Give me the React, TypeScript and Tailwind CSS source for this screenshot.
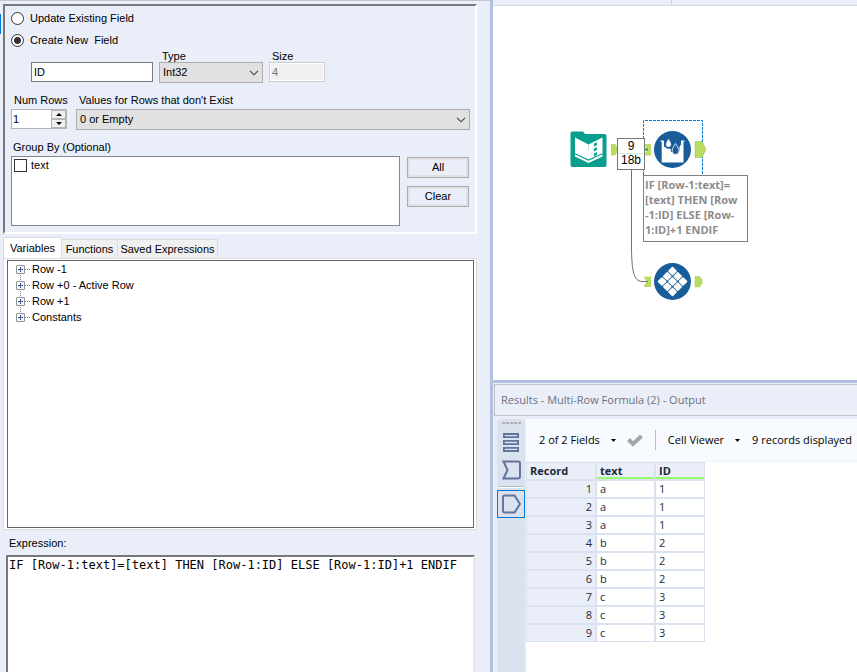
import { useState } from "react";

const rows: [number, string, number][] = [
  [1, "a", 1],
  [2, "a", 1],
  [3, "a", 1],
  [4, "b", 2],
  [5, "b", 2],
  [6, "b", 2],
  [7, "c", 3],
  [8, "c", 3],
  [9, "c", 3],
];

const treeItems = ["Row -1", "Row +0 - Active Row", "Row +1", "Constants"];

function Chevron() {
  return (
    <svg className="pointer-events-none absolute top-2 right-1 h-[6px] w-[10px]" viewBox="0 0 10 6" fill="none" stroke="#444" strokeWidth="1.1">
      <path d="M1 0.8 5 4.8 9 0.8" />
    </svg>
  );
}

function Radio({ id, label, checked, onChange }: { id: string; label: string; checked: boolean; onChange: () => void }) {
  return (
    <div className="flex h-[22px] items-center gap-[6px]">
      <input
        type="radio"
        id={id}
        name="mode"
        checked={checked}
        onChange={onChange}
        className="size-[13px] appearance-none rounded-full border border-[#333] bg-white checked:bg-[radial-gradient(circle,#333_0_3px,#fff_4px)]"
      />
      <label htmlFor={id} className="whitespace-pre">{label}</label>
    </div>
  );
}

function FieldSettings() {
  const [mode, setMode] = useState("create");
  const [count, setCount] = useState(1);
  const [grouped, setGrouped] = useState(false);
  const button = "h-[21px] w-full border border-[#adadad] shadow-[inset_0_0_0_2px_#e1e1e1]";
  return (
    <section className="mr-[13px] ml-[3px] h-[230px] border-2 border-t-[#77777c] border-r-white border-b-white border-l-[#77777c] pt-px pr-[5px] pl-[6px]">
      <Radio id="update" label="Update Existing Field" checked={mode === "update"} onChange={() => setMode("update")} />
      <Radio id="create" label="Create New  Field" checked={mode === "create"} onChange={() => setMode("create")} />
      <div className="flex items-end gap-[6px] pl-5">
        <input aria-label="Field name" defaultValue="ID" className="mb-px h-5 w-[122px] border border-[#7a7a7a] bg-white px-[2px]" />
        <div className="w-[104px]">
          <label htmlFor="type" className="block pl-[3px] leading-[11px]">Type</label>
          <div className="relative">
            <select id="type" className="block h-[21px] w-full appearance-none border border-[#adadad] bg-[#e1e1e1] px-[3px]">
              <option>Int32</option>
            </select>
            <Chevron />
          </div>
        </div>
        <div className="w-14 self-start">
          <label htmlFor="size" className="block pl-[3px] leading-[11px]">Size</label>
          <input id="size" disabled defaultValue="4" className="block h-5 w-full border border-[#ccc] bg-[#f0f0f0] px-[2px] text-[#777] shadow-[inset_0_0_0_1px_#fff]" />
        </div>
      </div>
      <div className="mt-[9px] flex gap-[9px]">
        <div className="w-14 shrink-0">
          <label htmlFor="numrows" className="block pb-px pl-[3px] leading-4 whitespace-nowrap">Num Rows</label>
          <div className="flex h-5 border border-[#b4b4b4] bg-white">
            <input
              id="numrows"
              type="number"
              value={count}
              onChange={(e) => setCount(Number(e.target.value))}
              className="w-0 min-w-0 flex-1 px-px [appearance:textfield] [&::-webkit-inner-spin-button]:appearance-none"
            />
            <div className="flex w-[15px] flex-col">
              <button type="button" aria-label="Increase" onClick={() => setCount(count + 1)} className="grid flex-1 place-items-center border border-[#b4b4b4] bg-[#f0f0f0]">
                <svg className="h-[3px] w-[6px]" viewBox="0 0 6 3"><path d="M0 3 3 0 6 3Z" /></svg>
              </button>
              <button type="button" aria-label="Decrease" onClick={() => setCount(count - 1)} className="grid flex-1 place-items-center border border-[#b4b4b4] bg-[#f0f0f0]">
                <svg className="h-[3px] w-[6px]" viewBox="0 0 6 3"><path d="M0 0 3 3 6 0Z" /></svg>
              </button>
            </div>
          </div>
        </div>
        <div className="flex-1">
          <label htmlFor="missing" className="block pb-px pl-[3px] leading-4">Values for Rows that don't Exist</label>
          <div className="relative">
            <select id="missing" className="block h-[21px] w-full appearance-none border border-[#adadad] bg-[#e1e1e1] px-[3px]">
              <option>0 or Empty</option>
            </select>
            <Chevron />
          </div>
        </div>
      </div>
      <div id="groupby" className="mt-2 pl-[2px] leading-[18px]">Group By (Optional)</div>
      <div className="flex gap-[7px] pr-px">
        <div role="group" aria-labelledby="groupby" className="h-[70px] flex-1 border border-[#828790] bg-white p-[2px]">
          <div className="flex items-start gap-1">
            <input id="text" type="checkbox" checked={grouped} onChange={() => setGrouped(!grouped)} className="size-[13px] appearance-none border border-[#333] bg-white checked:bg-[#333]" />
            <label htmlFor="text" className="leading-3">text</label>
          </div>
        </div>
        <div className="flex w-[62px] flex-col gap-2 pt-px">
          <button type="button" className={button}>All</button>
          <button type="button" className={button}>Clear</button>
        </div>
      </div>
    </section>
  );
}

function VariablesTabs() {
  return (
    <section className="mt-[3px] mr-[13px] ml-[3px]">
      <div role="tablist" className="flex items-end">
        <button role="tab" aria-selected="true" type="button" className="h-[21px] w-[59px] border border-b-0 border-[#dcdcdc] bg-white">Variables</button>
        <button role="tab" aria-selected="false" type="button" className="h-[19px] w-14 border-t border-r border-[#dcdcdc] bg-[#f0f0f0]">Functions</button>
        <button role="tab" aria-selected="false" type="button" className="h-[19px] w-[100px] border-t border-r border-[#dcdcdc] bg-[#f0f0f0]">Saved Expressions</button>
      </div>
      <div className="h-[272px] border border-[#dcdcdc] bg-white py-px pr-[2px] pl-[3px]">
        <ul className="h-full border border-[#646464] bg-white pl-2">
          {treeItems.map((item, i) => (
            <li key={item} className="flex h-4 items-center gap-px">
              <svg className="h-4 w-[15px] shrink-0" viewBox="0 0 15 16" fill="none">
                <path d={i === 0 ? "M4.5 12V16" : i === 3 ? "M4.5 0V4" : "M4.5 0V16"} stroke="#888" strokeDasharray="1 1" />
                <path d="M9 8.5H14" stroke="#888" strokeDasharray="1 1" />
                <rect x="0.5" y="4.5" width="8" height="8" rx="0.5" fill="#f7f7f7" stroke="#919191" />
                <path d="M2 8.5H7M4.5 6V11" stroke="#34559e" />
              </svg>
              <span>{item}</span>
            </li>
          ))}
        </ul>
      </div>
    </section>
  );
}

function Canvas() {
  return (
    <div className="relative h-[374px] overflow-hidden bg-white">
      <svg className="absolute top-0 left-0 h-[320px] w-[260px]" viewBox="493 6 260 320" fill="none">
        <path d="M643.5 175V120.500H702.500V175" stroke="#0078d7" strokeDasharray="3 1" />
        <path d="M631.500 169V245C631.500 272 634 281 642 281.500H648" stroke="#707070" />
        <path d="M570.500 133.500Q570.500 131.500 572.500 131.500H583L585 134H604.500Q606.500 134 606.500 136V165Q606.500 167 604.500 167H572.500Q570.500 167 570.500 165Z" fill="#0a9e8e" />
        <path d="M575 137.500 588.500 144.500 602.500 137.500V156.500L588.500 163 575 156.500Z" fill="#fff" />
        <path d="M588.500 144.500V150" stroke="#0a9e8e" strokeWidth="0.300" />
        <path d="M575 153.800 588.500 160 602.500 153.800" stroke="#0a9e8e" strokeWidth="1.200" />
        <path d="M593.900 143.800 596.900 142.200V145.200L593.900 146.600ZM593.900 148.700 596.900 147.100V150.100L593.900 151.500ZM593.900 153.600 596.900 152V155L593.900 156.400Z" fill="#0a9e8e" />
        <g fill="#b9dc62">
          <path d="M611 144H615Q618 147 618 149.500T615 155.500H611Z" />
          <path d="M644 144H651V155.500H644L647 149.500Z" />
          <path d="M695 141.500H702L706 149.500 702 157.500H695Z" stroke="#97bb43" strokeWidth="0.500" />
          <path d="M643.500 276.500H651V287H643.500L646.500 281.500Z" />
          <path d="M695 276.500H699.500L702 279.500V283.500L699.500 287H695Z" stroke="#a6ca50" strokeWidth="0.500" />
        </g>
        <path d="M643 281.500H648" stroke="#707070" />
        <path d="M645 149.500H648" stroke="#2f9a52" strokeWidth="2" />
        <circle cx="672.500" cy="149.500" r="18.500" fill="#175d99" />
        <path d="M660.500 140.500H664V150.500L668 149.500 672 152.500H678.500L681 150V140.500H684.500V141.500L683.500 142V162.500H661.700V142L660.500 141.500Z" fill="#fff" />
        <path d="M664 146.500 667 148.500 671 149 670 153H664ZM681 144.500 679.500 147V153H681Z" fill="#fff" />
        <path d="M668.500 138.500Q671.500 142.500 671.300 144.500A2.800 2.800 0 0 1 665.700 144.500Q665.500 142.500 668.500 138.500Z" fill="#fff" stroke="#175d99" strokeWidth="0.600" />
        <path d="M675.500 143.500Q679.300 149 679 151A3.500 3.500 0 0 1 672 151Q671.800 149 675.500 143.500Z" fill="#175d99" stroke="#fff" strokeWidth="0.800" />
        <circle cx="672.500" cy="281.500" r="18.500" fill="#175d99" />
        <g transform="rotate(45 672.500 281.500)" fill="#fff">
          {[0, 1, 2].flatMap((r) =>
            [0, 1, 2].map((c) => <rect key={`${r}${c}`} x={661.8 + c * 7.4} y={270.8 + r * 7.4} width="6.600" height="6.600" rx="0.900" />),
          )}
        </g>
      </svg>
      <div className="absolute top-[132px] left-[124px] h-8 w-7 border border-[#777] bg-white pt-px text-center text-[12px] leading-[13px]">
        <div className="border-b border-[#cdeedd]">9</div>
        <div className="leading-3">18b</div>
      </div>
      <div className="absolute top-[169px] left-[150px] h-[67px] w-[105px] border border-[#808080] bg-white pt-px pl-px font-['Open_Sans','Noto_Sans',sans-serif] text-[11px] leading-[15px] font-bold whitespace-nowrap text-[#8c8c8c]">
        IF [Row-1:text]=
        <br />
        [text] THEN [Row
        <br />
        -1:ID] ELSE [Row-
        <br />
        1:ID]+1 ENDIF
      </div>
    </div>
  );
}

function Caret() {
  return <svg className="h-[3px] w-[5px]" viewBox="0 0 5 3"><path d="M0 0H5L2.500 3Z" /></svg>;
}

function Results() {
  const cell = "h-[18px] border border-[#dbe2ef] p-0";
  return (
    <section className="flex min-h-0 flex-1 flex-col border-t-[3px] border-[#b1c0e0] pl-px font-['Open_Sans','Noto_Sans',sans-serif]">
      <h2 className="mt-px flex h-8 shrink-0 items-center border border-r-0 border-[#c3c3c6] pl-[6px] whitespace-nowrap text-[#6f7078]">Results - Multi-Row Formula (2) - Output</h2>
      <div className="flex min-h-0 flex-1 pt-[3px] pl-[3px]">
        <div className="flex w-7 shrink-0 flex-col items-center rounded-t bg-[#dbe2ef]">
          <svg className="mt-[3px] h-[2px] w-[19px]" viewBox="0 0 19 2" fill="none">
            <path d="M0 1H19" stroke="#b0b0b4" strokeWidth="2" strokeDasharray="3 1" />
          </svg>
          <button type="button" aria-label="Data" className="mt-[9px]">
            <svg className="block h-[19px] w-4" viewBox="0 0 16 19" fill="none" stroke="#62739c" strokeWidth="1.800">
              <path d="M0.900 1H15.100V4.200H0.900ZM0.900 7.900H15.100V11.100H0.900ZM0.900 14.800H15.100V18H0.900Z" />
            </svg>
          </button>
          <button type="button" aria-label="Input anchor" className="mt-2">
            <svg className="block h-5 w-[19px]" viewBox="0 0 19 20" fill="none" stroke="#62739c" strokeWidth="2">
              <path d="M1.500 1.500H16Q18 1.500 18 3.500V16.500Q18 18.500 16 18.500H1.500L5.500 10Z" />
            </svg>
          </button>
          <div className="mt-[6px] h-[2px] w-6 border-t border-b border-t-[#b8b8bb] border-b-white" />
          <button type="button" aria-label="Output anchor" className="mt-[2px] grid size-7 shrink-0 place-items-center border border-[#0078d7]">
            <svg className="h-5 w-[19px]" viewBox="0 0 19 20" fill="none" stroke="#62739c" strokeWidth="2">
              <path d="M3 1.500H12.500L18 10 12.500 18.500H3Q1 18.500 1 16.500V3.500Q1 1.500 3 1.500Z" />
            </svg>
          </button>
        </div>
        <div className="ml-px min-w-0 flex-1 overflow-hidden bg-white">
          <div className="flex h-[43px] items-center rounded-tl border-b border-[#f0f2f5] bg-[#f7fbff] pl-[13px] whitespace-nowrap">
            <button type="button" className="flex items-center gap-[11px]">2 of 2 Fields <Caret /></button>
            <svg className="mr-3 ml-[11px] h-[13px] w-4" viewBox="0 0 16 13" fill="none" stroke="#a5a5a5" strokeWidth="4">
              <path d="M1.500 5.500 6 10 14.500 2" />
            </svg>
            <div className="mr-3 h-5 w-px bg-[#bdbdbd]" />
            <button type="button" className="flex items-center gap-[11px]">Cell Viewer <Caret /></button>
            <span className="ml-3">9 records displayed</span>
          </div>
          <table className="border-separate border-spacing-0 text-[#1f2937]">
            <thead>
              <tr className="bg-[#e9eef9] text-left leading-[14px]">
                <th className={`${cell} w-[70px] pl-[3px]`}>Record</th>
                <th className={`${cell} w-[59px] pl-[3px] shadow-[inset_0_-2px_0_#98fb70]`}>text</th>
                <th className={`${cell} w-[50px] pl-[3px] shadow-[inset_0_-2px_0_#98fb70]`}>ID</th>
              </tr>
            </thead>
            <tbody className="leading-4">
              {rows.map(([n, text, id]) => (
                <tr key={n}>
                  <td className={`${cell} bg-[#e9eef9] pr-[3px] text-right`}>{n}</td>
                  <td className={`${cell} pl-[3px]`}>{text}</td>
                  <td className={`${cell} pl-[3px]`}>{id}</td>
                </tr>
              ))}
            </tbody>
          </table>
        </div>
      </div>
    </section>
  );
}

export default function App() {
  return (
    <main className="grid h-screen grid-cols-[minmax(0,490fr)_minmax(0,367fr)] overflow-hidden bg-[#e9eef9] font-['Liberation_Sans',Arial,sans-serif] text-[11px] text-black">
      <div className="flex min-h-0 flex-col border-t border-[#c6c6c8]">
        <div className="relative pt-[3px]">
          <div className="absolute top-[13px] left-0 h-5 w-px bg-[#0078d7]" />
          <FieldSettings />
        </div>
        <VariablesTabs />
        <label htmlFor="expression" className="mt-[5px] pl-[9px] leading-4">Expression:</label>
        <textarea
          id="expression"
          spellCheck={false}
          defaultValue="IF [Row-1:text]=[text] THEN [Row-1:ID] ELSE [Row-1:ID]+1 ENDIF"
          className="mt-1 mr-[15px] ml-[6px] min-h-0 flex-1 resize-none border-2 border-b-0 border-t-[#77777c] border-r-[#e6e6e6] border-l-[#77777c] bg-white px-px font-['DejaVu_Sans_Mono','Liberation_Mono',monospace] text-[12px] leading-4"
        />
      </div>
      <div className="flex min-h-0 flex-col border-l-[3px] border-[#b1c0e0]">
        <div className="h-[6px] shrink-0 border-b border-[#d5dbe8] pl-[178px]">
          <div className="h-full w-px bg-[#c8cedd]" />
        </div>
        <Canvas />
        <Results />
      </div>
    </main>
  );
}
